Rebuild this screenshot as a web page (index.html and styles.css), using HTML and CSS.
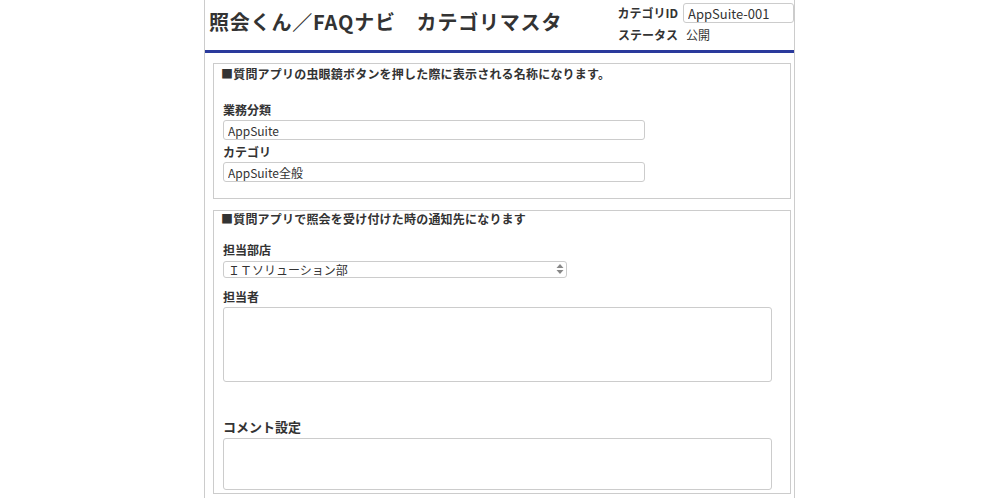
FILE: index.html
```html
<!DOCTYPE html>
<html lang="ja">
<head>
  <meta charset="utf-8">
  <title>照会くん／FAQナビ　カテゴリマスタ</title>
  <link rel="stylesheet" href="styles.css">
</head>
<body>
  <div class="page">
    <header class="header">
      <h1 class="title">照会くん／FAQナビ　カテゴリマスタ</h1>
      <div class="meta">
        <span class="meta-label">カテゴリID</span>
        <input class="meta-input" type="text" value="AppSuite-001">
        <span class="meta-label">ステータス</span>
        <span class="meta-value">公開</span>
      </div>
    </header>

    <div class="content">
      <section class="panel panel-first">
        <h2 class="panel-title">■質問アプリの虫眼鏡ボタンを押した際に表示される名称になります。</h2>
        <div class="fields">
          <label class="field-label first">業務分類</label>
          <input class="text-input" type="text" value="AppSuite">
          <label class="field-label">カテゴリ</label>
          <input class="text-input" type="text" value="AppSuite全般">
        </div>
      </section>

      <section class="panel panel-second">
        <h2 class="panel-title">■質問アプリで照会を受け付けた時の通知先になります</h2>
        <div class="fields">
          <label class="field-label first">担当部店</label>
          <div class="select-wrap">
            <select class="select-input">
              <option>ＩＴソリューション部</option>
            </select>
            <svg class="select-arrows" width="8" height="12" viewBox="0 0 8 12">
              <path d="M4 1 L7.5 5 L0.5 5 Z" fill="#888"/>
              <path d="M4 11 L7.5 7 L0.5 7 Z" fill="#888"/>
            </svg>
          </div>
          <label class="field-label spaced">担当者</label>
          <textarea class="area-input tall"></textarea>
          <label class="field-label big">コメント設定</label>
          <textarea class="area-input short"></textarea>
        </div>
      </section>
    </div>
  </div>
</body>
</html>
```

FILE: styles.css
```css
*, *::before, *::after {
  box-sizing: border-box;
  margin: 0;
  padding: 0;
}

html, body {
  height: 100%;
}

body {
  font-family: "Noto Sans CJK JP", "Noto Sans", sans-serif;
  font-size: 12px;
  color: #333333;
  background-color: #ffffff;
}

.page {
  width: 591px;
  min-height: 100%;
  margin: 0 auto 0 204px;
  border-left: 1px solid #cccccc;
  border-right: 1px solid #cccccc;
}

/* header */
.header {
  display: flex;
  justify-content: space-between;
  height: 53px;
  border-bottom: 3px solid #2a3a9c;
}

.title {
  font-size: 20px;
  font-weight: bold;
  line-height: 28px;
  letter-spacing: 0.8px;
  padding: 8px 0 0 4px;
  color: #333333;
}

.meta {
  display: grid;
  grid-template-columns: auto 111px;
  grid-template-rows: 20px 22px;
  column-gap: 5px;
  align-items: center;
  padding-top: 3px;
}

.meta-label {
  font-weight: bold;
  text-align: right;
  line-height: 16px;
}

.meta-input {
  height: 20px;
  width: 111px;
  padding: 0 4px;
  font-family: inherit;
  font-size: 13px;
  color: #333333;
  border: 1px solid #cccccc;
  border-radius: 3px;
}

.meta-value {
  padding-left: 3px;
  font-size: 12px;
  line-height: 16px;
  padding-top: 1px;
}

.meta .meta-label:nth-of-type(2) {
  padding-top: 1px;
}

/* panels */
.content {
  padding: 10px 3px 0 8px;
}

.panel {
  border: 1px solid #cccccc;
  padding: 0 6px;
}

.panel + .panel {
  margin-top: 11px;
}

.panel-first {
  padding-top: 2px;
  padding-bottom: 16px;
}

.panel-second {
  padding-bottom: 3px;
}

.panel-title {
  font-size: 12px;
  font-weight: bold;
  line-height: 16px;
  letter-spacing: 0.2px;
  padding-left: 1px;
}

.fields {
  display: flex;
  flex-direction: column;
  align-items: flex-start;
  padding-left: 3px;
}

.field-label {
  display: block;
  font-weight: bold;
  line-height: 16px;
  margin: 4px 0 2px;
}

.panel-first .field-label.first {
  margin-top: 20px;
}

.panel-second .field-label.first {
  margin-top: 15px;
  margin-bottom: 3px;
}

.field-label.spaced {
  margin-top: 11px;
}

.field-label.big {
  font-size: 13px;
  line-height: 18px;
  margin-top: 36px;
}

.text-input {
  width: 422px;
  height: 20px;
  padding: 0 4px;
  font-family: inherit;
  font-size: 12px;
  color: #333333;
  border: 1px solid #cccccc;
  border-radius: 3px;
}

.select-wrap {
  position: relative;
  width: 344px;
  height: 17px;
}

.select-input {
  appearance: none;
  width: 100%;
  height: 17px;
  padding: 0 4px;
  font-family: inherit;
  font-size: 12px;
  line-height: 15px;
  color: #333333;
  background: #ffffff;
  border: 1px solid #cccccc;
  border-radius: 3px;
}

.select-arrows {
  position: absolute;
  right: 3px;
  top: 2px;
}

.area-input {
  width: 549px;
  border: 1px solid #cccccc;
  border-radius: 3px;
  resize: none;
  font-family: inherit;
}

.area-input.tall {
  height: 75px;
}

.area-input.short {
  height: 52px;
}
```
